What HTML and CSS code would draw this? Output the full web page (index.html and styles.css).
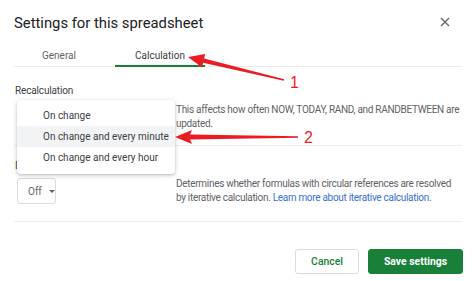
FILE: index.html
```html
<!DOCTYPE html>
<html>
<head>
<meta charset="utf-8">
<link rel="stylesheet" href="styles.css">
</head>
<body>
<div class="dialog">
  <header class="head">
    <h1 class="title">Settings for this spreadsheet</h1>
    <svg class="close" width="10" height="10" viewBox="0 0 10 10"><path d="M1 1L9 9M9 1L1 9" stroke="#5f6368" stroke-width="1.3"/></svg>
  </header>
  <nav class="tabs">
    <div class="tab">General</div>
    <div class="tab active">Calculation</div>
  </nav>
  <section class="sec sec-recalc">
    <div class="label">Recalculation</div>
    <div class="row row-recalc">
      <div class="ctrl"></div>
      <p class="desc">This affects how often NOW, TODAY, RAND, and RANDBETWEEN are updated.</p>
    </div>
  </section>
  <hr class="divider divider-mid">
  <section class="sec sec-iter">
    <div class="label">Iterative calculation</div>
    <div class="row row-iter">
      <div class="ctrl">
        <div class="select">Off <span class="caret"></span></div>
      </div>
      <p class="desc">Determines whether formulas with circular references are resolved by iterative calculation. <span class="link">Learn more about iterative calculation.</span></p>
    </div>
  </section>
  <hr class="divider divider-foot">
  <footer class="foot">
    <button class="btn btn-cancel">Cancel</button>
    <button class="btn btn-save">Save settings</button>
  </footer>

  <ul class="menu">
    <li class="item">On change</li>
    <li class="item hover">On change and every minute</li>
    <li class="item">On change and every hour</li>
  </ul>

  <svg class="annot" width="474" height="281" viewBox="0 0 474 281">
    <polygon fill="#ec1c24" points="188,57 205.2,53.9 204.1,58.6 284.2,79.2 283.8,80.8 203.1,62.8 202,67.5"/>
    <text x="290" y="88" class="num">1</text>
    <polygon fill="#ec1c24" points="175,137 192,130 190,134.6 298,136.2 298,137.8 190,139.4 192,144"/>
    <text x="304" y="143" class="num">2</text>
  </svg>
</div>
</body>
</html>
```

FILE: styles.css
```css
* { box-sizing: border-box; }
html, body { margin: 0; padding: 0; background: #fff; }
body { font-family: Roboto, "Noto Sans", Arial, sans-serif; color: #202124; }

.dialog {
  position: relative;
  width: 474px;
  height: 281px;
  padding: 0 12px 0 14px;
  overflow: hidden;
}

.head {
  height: 44px;
  display: flex;
  align-items: center;
  justify-content: space-between;
}
.title {
  margin: 0;
  font-size: 14.8px;
  font-weight: 400;
  color: #202124;
  line-height: 20px;
  padding-top: 2px;
}
.close { margin-right: 12px; }

.tabs {
  display: flex;
  gap: 11px;
  height: 23px;
  border-bottom: 1px solid #e8eaed;
}
.tab {
  width: 90px;
  text-align: center;
  font-size: 10px;
  line-height: 16px;
  padding-top: 4px;
  color: #5f6368;
}
.tab.active {
  color: #3c4043;
  box-shadow: inset 0 -2px 0 #188038;
  height: 23px;
}

.label {
  font-size: 10px;
  line-height: 14px;
  color: #3c4043;
  padding-left: 1px;
  letter-spacing: -0.15px;
}
.sec-recalc .label { margin-top: 17px; }
.sec-iter .label { margin-top: 13px; }

.row {
  display: grid;
  grid-template-columns: 162px 1fr;
}
.row-recalc { margin-top: 5px; }
.row-iter { margin-top: 4px; }

.desc {
  margin: 0;
  font-size: 10px;
  line-height: 14px;
  letter-spacing: -0.3px;
  color: #5f6368;
}
.link { color: #3b6fd4; }

.divider {
  margin: 16px 0 0 0;
  border: 0;
  border-top: 1px solid #eceef0;
  height: 0;
}
.divider-mid { margin-top: 14px; }

.ctrl { padding-left: 3px; }
.select {
  margin-top: 1px;
  width: 39px;
  height: 26px;
  border: 1px solid #dadce0;
  border-radius: 3px;
  font-size: 10px;
  color: #5f6368;
  display: flex;
  align-items: center;
  padding-left: 10px;
  gap: 7px;
}
.caret {
  width: 0; height: 0;
  border-left: 3px solid transparent;
  border-right: 3px solid transparent;
  border-top: 3px solid #5f6368;
}

.foot {
  display: flex;
  justify-content: flex-end;
  gap: 9px;
  margin-top: 27px;
}
.btn {
  height: 25px;
  font-family: inherit;
  font-size: 10.4px;
  border-radius: 3px;
  padding: 0;
  cursor: pointer;
}
.btn-cancel {
  width: 64px;
  background: #fff;
  color: #188038;
  border: 1px solid #dadce0;
  font-weight: 500;
}
.btn-save {
  width: 95px;
  background: #188038;
  color: #fff;
  border: 1px solid #188038;
  font-weight: 700;
  margin-right: -1px;
}

.menu {
  position: absolute;
  left: 17px;
  top: 100px;
  width: 158px;
  height: 74px;
  margin: 0;
  padding: 5px 0 6px;
  list-style: none;
  background: #fff;
  border-radius: 4px;
  box-shadow: 0 1px 3px rgba(60,64,67,0.28), 0 2px 6px rgba(60,64,67,0.12);
}
.item {
  height: 21px;
  line-height: 21px;
  padding-left: 26px;
  font-size: 10px;
  color: #3c4043;
  white-space: nowrap;
}
.item.hover { background: #f1f3f4; }

.annot {
  position: absolute;
  left: 0; top: 0;
  pointer-events: none;
}
.num {
  font-family: "Liberation Sans", Arial, sans-serif;
  font-size: 16px;
  fill: #ec1c24;
}
```
